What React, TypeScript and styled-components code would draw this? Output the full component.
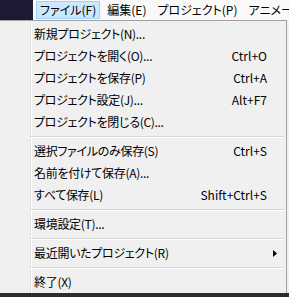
import React from "react";
import styled, { createGlobalStyle } from "styled-components";

const GlobalStyle = createGlobalStyle`
  html, body {
    margin: 0;
    padding: 0;
    background: #f0f0f0;
  }
  body {
    font-family: "Noto Sans CJK JP", "Noto Sans", sans-serif;
    font-feature-settings: "palt";
    -webkit-font-smoothing: antialiased;
  }
`;

const Screen = styled.div`
  width: 289px;
  height: 297px;
  overflow: hidden;
  display: flex;
  flex-direction: column;
  background: #f0f0f0;
  color: #000;
  font-size: 12px;
`;

const TopBar = styled.div`
  display: flex;
  height: 20px;
  flex-shrink: 0;
`;

const DarkCorner = styled.div`
  width: 33px;
  background: #1d1a33;
`;

const MenuBar = styled.div`
  flex: 1;
  display: flex;
  align-items: flex-start;
  gap: 3px;
  padding-left: 3px;
  padding-top: 1px;
  background: #f9f9f9;
  white-space: nowrap;
  overflow: hidden;
`;

const BarItem = styled.div<{ $active?: boolean }>`
  height: 16px;
  line-height: 16px;
  padding: 0 3px;
  border: 1px solid ${(p) => (p.$active ? "#99d1ff" : "transparent")};
  background: ${(p) => (p.$active ? "#cce8ff" : "transparent")};
`;

const Dropdown = styled.div`
  width: 287px;
  height: 273px;
  flex-shrink: 0;
  box-sizing: border-box;
  border-top: 1px solid #a0a0a0;
  border-right: 1px solid #a0a0a0;
  padding-top: 2px;
  background: linear-gradient(
    to right,
    #f0f0f0 0,
    #f0f0f0 30px,
    #e2e2e2 30px,
    #e2e2e2 31px,
    #ffffff 31px,
    #ffffff 32px,
    #f0f0f0 32px
  );
`;

const Item = styled.div`
  display: grid;
  grid-template-columns: 1fr auto 19px;
  align-items: center;
  height: 22px;
  padding-left: 34px;
  white-space: nowrap;
`;

const Label = styled.span`
  line-height: 22px;
  letter-spacing: -0.3px;
`;

const Shortcut = styled.span`
  line-height: 22px;
  text-align: right;
`;

const Arrow = styled.span`
  display: flex;
  align-items: center;
  padding-left: 6px;
`;

const Separator = styled.div`
  height: 7px;
  margin: 0 2px 0 30px;
  display: flex;
  flex-direction: column;
  justify-content: center;
  &::before {
    content: "";
    height: 1px;
    background: #d7d7d7;
  }
  &::after {
    content: "";
    height: 1px;
    background: #ffffff;
  }
`;

const BottomStrip = styled.div`
  flex: 1;
  background: #2d2d2d;
`;

type Entry =
  | { kind: "item"; label: string; shortcut?: string; submenu?: boolean }
  | { kind: "sep" };

const entries: Entry[] = [
  { kind: "item", label: "新規プロジェクト(N)..." },
  { kind: "item", label: "プロジェクトを開く(O)...", shortcut: "Ctrl+O" },
  { kind: "item", label: "プロジェクトを保存(P)", shortcut: "Ctrl+A" },
  { kind: "item", label: "プロジェクト設定(J)...", shortcut: "Alt+F7" },
  { kind: "item", label: "プロジェクトを閉じる(C)..." },
  { kind: "sep" },
  { kind: "item", label: "選択ファイルのみ保存(S)", shortcut: "Ctrl+S" },
  { kind: "item", label: "名前を付けて保存(A)..." },
  { kind: "item", label: "すべて保存(L)", shortcut: "Shift+Ctrl+S" },
  { kind: "sep" },
  { kind: "item", label: "環境設定(T)..." },
  { kind: "sep" },
  { kind: "item", label: "最近開いたプロジェクト(R)", submenu: true },
  { kind: "sep" },
  { kind: "item", label: "終了(X)" },
];

const SubmenuArrow = () => (
  <svg width="4" height="7" viewBox="0 0 4 7">
    <polygon points="0,0 4,3.5 0,7" fill="#000" />
  </svg>
);

export default function App() {
  return (
    <>
      <GlobalStyle />
      <Screen>
        <TopBar>
          <DarkCorner />
          <MenuBar>
            <BarItem $active>ファイル(F)</BarItem>
            <BarItem>編集(E)</BarItem>
            <BarItem>プロジェクト(P)</BarItem>
            <BarItem>アニメーション(A)</BarItem>
          </MenuBar>
        </TopBar>
        <Dropdown>
          {entries.map((e, i) =>
            e.kind === "sep" ? (
              <Separator key={i} />
            ) : (
              <Item key={i}>
                <Label>{e.label}</Label>
                <Shortcut>{e.shortcut ?? ""}</Shortcut>
                <Arrow>{e.submenu ? <SubmenuArrow /> : null}</Arrow>
              </Item>
            )
          )}
        </Dropdown>
        <BottomStrip />
      </Screen>
    </>
  );
}
